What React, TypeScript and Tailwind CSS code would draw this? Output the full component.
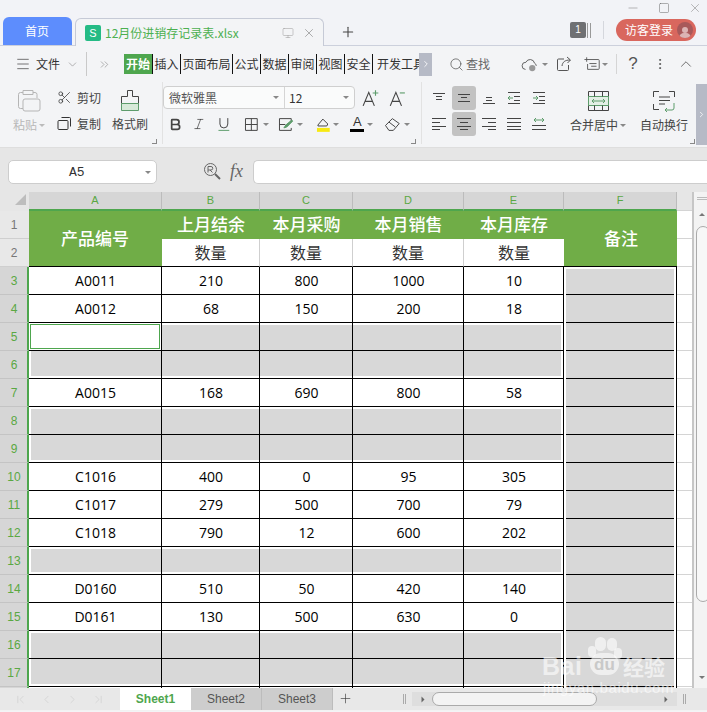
import type { ReactNode } from 'react'
import { Plus, X, Minus, Square, ChevronDown, ChevronUp, ChevronLeft, ChevronRight, Search, EllipsisVertical, Menu, ChevronsRight, ChevronFirst, ChevronLast, Scissors, Bold, Italic, Monitor } from 'lucide-react'

type L = [number, number, number]

// align icons: each line is x1, x2, y in a 16x16 box
function Lines({ lines, arrow }: { lines: L[]; arrow?: string }) {
  return (
    <svg width="16" height="16" viewBox="0 0 16 16" fill="none" stroke="#444" strokeWidth="1">
      {lines.map(([a, b, y], i) => (
        <path key={i} d={`M${a} ${y + 0.5}H${b}`} />
      ))}
      {arrow && <path d={arrow} stroke="#5d9c6b" />}
    </svg>
  )
}

function Caret({ color = '#888' }: { color?: string }) {
  return <span className="block w-0 h-0 border-x-[3px] border-x-transparent border-t-[3px]" style={{ borderTopColor: color }} />
}

function Corner() {
  return <span className="block w-[5px] h-[5px] border-r border-b border-[#888]" />
}

function AlignBtn({ active, children }: { active?: boolean; children: ReactNode }) {
  return (
    <div className={`w-[24px] h-[24px] rounded-[3px] flex items-center justify-center ${active ? 'bg-[#c2c2c2]' : ''}`}>
      {children}
    </div>
  )
}

const menuTabs = [
  { t: '插入', w: 'w-[28px]' },
  { t: '页面布局', w: 'w-[52px]' },
  { t: '公式', w: 'w-[28px]' },
  { t: '数据', w: 'w-[28px]' },
  { t: '审阅', w: 'w-[28px]' },
  { t: '视图', w: 'w-[28px]' },
  { t: '安全', w: 'w-[28px]' },
]

function TitleBar() {
  return (
    <div className="h-[46px] bg-[#f2f3f7] border-b border-[#ccd0dc] flex relative">
      <div className="flex items-end pl-[3px] gap-[3px] h-[45px]">
        <div className="w-[69px] h-[28px] rounded-t-[6px] bg-[#5d8dfd] text-white text-[12px] flex items-center justify-center pr-[1px]">首页</div>
        <div className="w-[249px] h-[28px] -mb-px rounded-t-[6px] bg-[#f3f4f6] border border-b-0 border-[#c6cad6] flex items-center pl-[9px]">
          <span className="w-[16px] h-[16px] rounded-[2px] bg-[#25bb85] text-white text-[11px] leading-[16px] text-center font-['Liberation_Sans']">S</span>
          <span className="ml-[4px] text-[12px] text-[#4cb050] flex-1">12月份进销存记录表.xlsx</span>
          <Monitor size={12} strokeWidth={1} color="#999" className="mr-[8px]" />
          <X size={14} strokeWidth={1} color="#777" className="mr-[7px]" />
        </div>
        <Plus size={16} strokeWidth={1.6} color="#444" className="ml-[13px] mb-[5px]" />
      </div>
      <div className="ml-auto flex flex-col items-end pr-[11px]">
        <div className="flex items-center h-[15px] gap-[18px] -mr-[6px]">
          <Minus size={14} strokeWidth={1} color="#888" />
          <Square size={12} strokeWidth={1} color="#666" />
          <X size={14} strokeWidth={1} color="#888" />
        </div>
        <div className="flex items-center mt-[4px]">
          <div className="w-[16px] h-[16px] rounded-[2px] bg-[#6f7073] text-white text-[10px] leading-[16px] text-center font-['Liberation_Sans'] mr-[1px]">1</div>
          <div className="w-[4px] h-[15px] border-x border-[#999] mr-[12px]" />
          <div className="w-px h-[18px] bg-[#d5d7dd] mr-[12px]" />
          <div className="w-[80px] h-[22px] rounded-full bg-[#d9675e] flex items-center pl-[9px] pr-[3px] justify-between">
            <span className="text-[12px] text-white">访客登录</span>
            <span className="w-[16px] h-[16px] rounded-full bg-[#a8595a] flex flex-col items-center justify-end overflow-hidden">
              <span className="w-[6px] h-[6px] rounded-full bg-[#dcb4b4]" />
              <span className="w-[12px] h-[5px] rounded-t-full bg-[#dcb4b4]" />
            </span>
          </div>
        </div>
      </div>
    </div>
  )
}

function MenuRow() {
  return (
    <div className="h-[36px] flex items-center text-[12px] text-[#333]">
      <Menu size={16} strokeWidth={1} color="#333" className="ml-[15px]" />
      <span className="ml-[5px]">文件</span>
      <ChevronDown size={13} strokeWidth={1} color="#777" className="ml-[6px]" />
      <div className="w-px h-[24px] bg-[#c9c9c9] ml-[7px]" />
      <ChevronsRight size={13} strokeWidth={1} color="#777" className="ml-[11px]" />
      <div className="ml-[13px] w-[28px] h-[20px] bg-[#4ea64e] text-white font-bold flex items-center justify-center">开始</div>
      <div className="w-px h-[20px] bg-[#111]" />
      {menuTabs.map((m) => (
        <div key={m.t} className={`${m.w} h-[20px] border-r border-[#111] flex items-center justify-center`}>{m.t}</div>
      ))}
      <div className="w-[46px] h-[20px] overflow-hidden whitespace-nowrap leading-[20px] pl-[4px]">开发工具</div>
      <div className="w-[13px] h-[23px] bg-[#b6bac6] flex items-center justify-center">
        <ChevronRight size={10} color="#fff" />
      </div>
      <Search size={15} strokeWidth={1.2} color="#555" className="ml-[17px]" />
      <span className="ml-[2px] text-[#666]">查找</span>
      <svg width="18" height="17" viewBox="0 0 20 18" fill="none" stroke="#555" className="ml-[31px]">
        <path d="M5 14.500a4 4 0 0 1 .5-8 5 5 0 0 1 9.500 1 3.500 3.500 0 0 1 2 3" />
        <circle cx="12.500" cy="13" r="3.500" fill="#999" stroke="none" />
      </svg>
      <span className="ml-[3px]"><Caret /></span>
      <svg width="16" height="16" viewBox="0 0 16 16" fill="none" stroke="#555" className="ml-[8px]">
        <path d="M8 3H2.500a1 1 0 0 0-1 1v9.500a1 1 0 0 0 1 1h9a1 1 0 0 0 1-1V9M6 10c.5-4 3-6 8-6M11 1l3.500 3-3 3" />
      </svg>
      <svg width="17" height="16" viewBox="0 0 19 17" fill="none" stroke="#555" className="ml-[12px]">
        <path d="M5 3.500h11a1 1 0 0 1 1 1v9a1 1 0 0 1-1 1H4v-6M6 8h8M8 11h6M3 1v5M.5 3.500h5" />
      </svg>
      <span className="ml-[1px]"><Caret /></span>
      <div className="w-px h-[20px] bg-[#d5d5d5] ml-[8px]" />
      <span className="ml-[10px] text-[17px] text-[#555] font-['Liberation_Sans'] w-[12px] text-center">?</span>
      <EllipsisVertical size={14} strokeWidth={1.6} color="#555" className="ml-[14px]" />
      <ChevronUp size={18} strokeWidth={1} color="#444" className="ml-[10px]" />
    </div>
  )
}

function Ribbon() {
  return (
    <div className="h-[66px] flex text-[12px] text-[#444] border-b border-[#dedede]">
      {/* paste */}
      <div className="w-[54px] pl-[13px] pt-[7px] flex flex-col shrink-0">
        <svg width="27" height="24" viewBox="0 0 27 24" fill="none" stroke="#b5b5b5" className="ml-[4px]">
          <path d="M6 3.500H3.500a2 2 0 0 0-2 2v12a2 2 0 0 0 2 2H6M16 3.500h2a2 2 0 0 1 2 2V9M6 1.500h10v4H6zM8 10h13a2 2 0 0 1 2 2v8a2 2 0 0 1-2 2H8a2 2 0 0 1-2-2v-8a2 2 0 0 1 2-2z" />
        </svg>
        <div className="mt-[3px] flex items-center gap-[2px] text-[#b8b8b8]">粘贴<Caret color="#bbb" /></div>
      </div>
      {/* cut/copy */}
      <div className="w-[56px] pl-[3px] pt-[7px] flex flex-col gap-[9px] shrink-0">
        <div className="flex items-center gap-[5px] h-[17px]"><Scissors size={15} strokeWidth={1.2} color="#333" />剪切</div>
        <div className="flex items-center gap-[5px] h-[17px]">
          <svg width="15" height="15" viewBox="0 0 15 15" fill="none" stroke="#333"><path d="M4.500 1.500h8a1 1 0 0 1 1 1v8M2 4.500h8a1 1 0 0 1 1 1v7a1 1 0 0 1-1 1H2a1 1 0 0 1-1-1v-7a1 1 0 0 1 1-1z" /></svg>
          复制
        </div>
      </div>
      {/* format brush */}
      <div className="w-[38px] flex flex-col items-center pt-[7px] pl-[2px] shrink-0">
        <svg width="22" height="23" viewBox="0 0 22 23" fill="none" stroke="#444">
          <path d="M8.500 1.500h5v6h6v7h-17v-7h6z" />
          <path d="M2.500 14.500h17v7h-17z" fill="#d7e9d9" stroke="#5d9c6b" />
        </svg>
        <div className="mt-[3px] whitespace-nowrap">格式刷</div>
      </div>
      <div className="w-[9px] flex flex-col justify-end pb-[3px] items-end shrink-0"><Corner /></div>
      <div className="w-px h-[62px] bg-[#e2e2e2] ml-[5px] shrink-0" />
      {/* font */}
      <div className="w-[247px] flex flex-col pt-[4px] shrink-0">
        <div className="flex items-center">
          <div className="w-[192px] h-[23px] bg-white/60 border border-[#cfcfcf] rounded-[4px] flex text-[12px] text-[#555] shrink-0">
            <div className="w-[121px] flex items-center pl-[5px] justify-between pr-[5px] border-r border-[#d5d5d5]">微软雅黑<Caret /></div>
            <div className="flex-1 flex items-center pl-[4px] justify-between pr-[5px]"><span className="text-[#333]">12</span><Caret /></div>
          </div>
          <svg width="18" height="18" viewBox="0 0 16 16" fill="none" stroke="#444" className="ml-[7px] shrink-0"><path d="M1 15 6 3l5 12M3 11h6" /><path d="M12 1v5M9.500 3.500h5" stroke="#5d9c6b" /></svg>
          <svg width="16" height="18" viewBox="0 0 14 16" fill="none" stroke="#444" className="ml-[9px] shrink-0"><path d="M1 15 6 3l5 12M3 11h6" /><path d="M9.500 3.500h4.500" stroke="#5d9c6b" /></svg>
        </div>
        <div className="flex items-center h-[24px] mt-[3px] pl-[5px]">
          <Bold size={15} strokeWidth={2.8} color="#444" />
          <Italic size={14} strokeWidth={1.2} color="#333" className="ml-[9px]" />
          <svg width="14" height="14" viewBox="0 0 14 14" fill="none" stroke="#444" className="ml-[12px]"><path d="M3 1v6a4 4 0 0 0 8 0V1" /><path d="M1.500 13.500h11" stroke="#5d9c6b" /></svg>
          <svg width="15" height="15" viewBox="0 0 15 15" fill="none" stroke="#444" className="ml-[13px]"><path d="M1.500 1.500h12v12h-12zM7.500 1.500v12M1.500 7.500h12" /></svg>
          <span className="ml-[4px]"><Caret /></span>
          <svg width="16" height="15" viewBox="0 0 16 15" fill="none" stroke="#444" className="ml-[9px]"><path d="M13.500 5V1.500h-12v12h12V11M1.500 7.500h6" /><path d="M6 11l2-3 6-5 1 1-6 6z" stroke="#5d9c6b" fill="#5d9c6b" /></svg>
          <span className="ml-[3px]"><Caret /></span>
          <svg width="17" height="17" viewBox="0 0 17 17" fill="none" stroke="#444" className="ml-[12px]"><path d="M3 9l5-6 5 5-1 2H3z" /><rect x="2" y="12" width="13" height="4" fill="#f7e912" stroke="none" /></svg>
          <span className="ml-[2px]"><Caret /></span>
          <div className="ml-[11px] flex flex-col items-center w-[14px] leading-none">
            <span className="text-[13px] text-[#333] font-['Liberation_Sans'] leading-[12px]">A</span>
            <span className="block w-[14px] h-[3px] bg-black mt-[1px]" />
          </div>
          <span className="ml-[3px]"><Caret /></span>
          <svg width="17" height="15" viewBox="0 0 17 15" fill="none" stroke="#444" className="ml-[11px]"><path d="M1.500 8.500 8.500 1.500l7 5-6 7H5zM5 5l6.500 5" /></svg>
          <span className="ml-[3px]"><Caret /></span>
        </div>
      </div>
      <div className="w-[6px] flex flex-col justify-end pb-[3px] items-end shrink-0"><Corner /></div>
      <div className="w-px h-[62px] bg-[#e2e2e2] ml-[5px] shrink-0" />
      {/* alignment */}
      <div className="w-[143px] pl-[5px] pt-[4px] flex flex-col gap-[2px] shrink-0">
        <div className="flex gap-px">
          <AlignBtn><Lines lines={[[2, 14, 3], [5, 11, 6], [5, 11, 9]]} /></AlignBtn>
          <AlignBtn active><Lines lines={[[2, 14, 4], [5, 11, 7], [2, 14, 11]]} /></AlignBtn>
          <AlignBtn><Lines lines={[[5, 11, 7], [5, 11, 10], [2, 14, 13]]} /></AlignBtn>
          <AlignBtn><Lines lines={[[2, 14, 2], [8, 14, 6], [8, 14, 10], [2, 14, 13]]} arrow="M7 8H2M4 6 2 8l2 2" /></AlignBtn>
          <AlignBtn><Lines lines={[[2, 14, 2], [8, 14, 6], [8, 14, 10], [2, 14, 13]]} arrow="M2 8h5M5 6l2 2-2 2" /></AlignBtn>
        </div>
        <div className="flex gap-px">
          <AlignBtn><Lines lines={[[1, 15, 2], [1, 9, 6], [1, 15, 10], [1, 9, 13]]} /></AlignBtn>
          <AlignBtn active><Lines lines={[[1, 15, 2], [4, 12, 6], [1, 15, 10], [4, 12, 13]]} /></AlignBtn>
          <AlignBtn><Lines lines={[[1, 15, 2], [7, 15, 6], [1, 15, 10], [7, 15, 13]]} /></AlignBtn>
          <AlignBtn><Lines lines={[[1, 15, 2], [1, 15, 6], [1, 15, 10], [1, 15, 13]]} /></AlignBtn>
          <AlignBtn><Lines lines={[[1, 15, 9], [1, 15, 13]]} arrow="M3 4h10M5 2 3 4l2 2M11 2l2 2-2 2" /></AlignBtn>
        </div>
      </div>
      {/* merge + wrap */}
      <div className="w-[66px] flex flex-col items-center pt-[8px] shrink-0">
        <svg width="23" height="22" viewBox="0 0 23 22" fill="none" stroke="#444">
          <path d="M1.500 1.500h20v19h-20z" /><path d="M1.500 6.500h20v9h-20z" stroke="#5d9c6b" fill="#e3efe5" />
          <path d="M7.500 1.500v5M15.500 1.500v5M7.500 15.500v5M15.500 15.500v5" />
          <path d="M5 11h13M7 9l-2 2 2 2M16 9l2 2-2 2" stroke="#5d9c6b" />
        </svg>
        <div className="mt-[4px] flex items-center gap-[2px] whitespace-nowrap">合并居中<Caret /></div>
      </div>
      <div className="w-[52px] ml-[7px] flex flex-col items-center pt-[8px] shrink-0">
        <svg width="24" height="22" viewBox="0 0 24 22" fill="none" stroke="#444">
          <path d="M1.500 7V1.500H7M17 1.500h5.500V7M1.500 14v5.500H7" />
          <path d="M7 7h11M7 10.500h11M7 14h6" />
          <path d="M22 13v5a2 2 0 0 1-2 2h-7M15 18l-2 2 2 2" stroke="#5d9c6b" />
        </svg>
        <div className="mt-[4px] whitespace-nowrap">自动换行</div>
      </div>
      <div className="w-[6px] flex flex-col justify-end pb-[3px] shrink-0"><Corner /></div>
      <div className="w-[11px] h-[61px] bg-[#b6bac6] mt-[2px] flex items-center justify-center shrink-0">
        <ChevronRight size={9} color="#fff" />
      </div>
    </div>
  )
}

function FormulaBar() {
  return (
    <div className="h-[44px] bg-[#e6e6e6] flex items-start pt-[12px] pl-[8px]">
      <div className="w-[149px] h-[24px] bg-white border border-[#cdcdcd] rounded-[5px] flex items-center pl-[60px] pr-[5px] justify-between">
        <span className="text-[13px] leading-[16px] pt-[2px] text-[#333] font-['Liberation_Mono']">A5</span>
        <Caret />
      </div>
      <div className="ml-[46px] mt-[2px] w-[18px] h-[18px]">
        <svg width="18" height="18" viewBox="0 0 18 18" fill="none" stroke="#666">
          <circle cx="7.500" cy="7.500" r="6" /><path d="M12 12l5 5" strokeWidth="2" /><path d="M5 10.500v-6h3a1.500 1.500 0 0 1 0 3.500H5M7 8l2.500 2.500" />
        </svg>
      </div>
      <span className="ml-[9px] w-[15px] text-[18px] leading-[22px] italic text-[#666] font-['Liberation_Serif']">fx</span>
      <div className="ml-[8px] flex-1 h-[24px] bg-white border border-[#cdcdcd] border-r-0 rounded-l-[5px]" />
    </div>
  )
}

type Row = { n: number; v?: [string, string, string, string, string]; first?: boolean; last?: boolean; sel?: boolean }

const rows: Row[] = [
  { n: 3, v: ['A0011', '210', '800', '1000', '10'] },
  { n: 4, v: ['A0012', '68', '150', '200', '18'] },
  { n: 5, first: true, sel: true },
  { n: 6, last: true },
  { n: 7, v: ['A0015', '168', '690', '800', '58'] },
  { n: 8, first: true },
  { n: 9, last: true },
  { n: 10, v: ['C1016', '400', '0', '95', '305'] },
  { n: 11, v: ['C1017', '279', '500', '700', '79'] },
  { n: 12, v: ['C1018', '790', '12', '600', '202'] },
  { n: 13, first: true, last: true },
  { n: 14, v: ['D0160', '510', '50', '420', '140'] },
  { n: 15, v: ['D0161', '130', '500', '630', '0'] },
  { n: 16, first: true },
  { n: 17, last: true },
]

const cols = ['A', 'B', 'C', 'D', 'E', 'F']

function RowHead({ n, light }: { n: number; light?: boolean }) {
  return light ? (
    <div className="bg-[#e8e8e8] border-b border-[#cfcfcf] text-[#777] text-[12px] flex items-center justify-center pr-[1px] font-['Liberation_Sans']">{n}</div>
  ) : (
    <div className="bg-[#d6d6d6] border-b border-[#c4c4c4] border-r-2 border-r-[#4ea64e] text-[#5aa843] text-[12px] flex items-center justify-center pl-[1px] font-['Liberation_Sans']">{n}</div>
  )
}

function GrayCell({ row, col }: { row: Row; col: number }) {
  const pad = `${row.first ? 'pt-[2px]' : ''} ${row.last ? 'pb-[2px]' : ''} ${col === 0 ? 'pl-[2px]' : ''} ${col === 4 ? 'pr-[2px]' : ''}`
  return (
    <div className={`bg-white border-r border-b border-black ${pad}`}>
      {row.sel && col === 0 ? (
        <div className="h-full -ml-px w-[130px] -mt-px border border-[#4ea64e] bg-white" />
      ) : (
        <div className="h-full bg-[#d8d8d8]" />
      )}
    </div>
  )
}

function Sheet() {
  return (
    <div className="flex h-[496px] overflow-hidden">
      <div className="w-[692px] overflow-hidden bg-white">
        <div className="grid grid-cols-[29px_133px_98px_93px_111px_100px_113px_15px] grid-rows-[19px_repeat(18,28px)] font-['Open_Sans','Noto_Sans_CJK_SC',sans-serif]">
          <div className="bg-[#e6e6e6] flex items-end justify-end pr-[3px] pb-[4px] border-b-2 border-[#e6e6e6]">
            <span className="w-0 h-0 border-l-[11px] border-l-transparent border-b-[11px] border-b-[#bdbdbd]" />
          </div>
          {cols.map((c) => (
            <div key={c} className="bg-[#d6d6d6] border-r border-[#bcbcbc] border-b-2 border-b-[#4ea64e] text-[11px] text-[#5aa843] flex items-center justify-center font-['Liberation_Sans']">{c}</div>
          ))}
          <div className="bg-[#e6e6e6] border-b border-[#d4d4d4]" />

          <RowHead n={1} light />
          <div className="row-span-2 bg-[#70ad47] border-b border-black text-white text-[17px] font-medium flex items-center justify-center pr-[1px]">产品编号</div>
          {['上月结余', '本月采购', '本月销售', '本月库存'].map((t) => (
            <div key={t} className="bg-[#70ad47] text-white text-[17px] font-medium flex items-center justify-center">{t}</div>
          ))}
          <div className="row-span-2 bg-[#70ad47] border-b border-black text-white text-[17px] font-medium flex items-center justify-center pl-[1px]">备注</div>
          <div className="border-b border-[#d4d4d4]" />

          <RowHead n={2} light />
          {[0, 1, 2, 3].map((i) => (
            <div key={i} className={`bg-white border-b border-black text-[16px] text-[#333] flex items-center justify-center ${i < 3 ? 'border-r border-r-[#cfcfcf]' : ''}`}>数量</div>
          ))}
          <div className="border-b border-[#d4d4d4]" />

          {rows.map((r) => (
            <div key={r.n} className="contents">
              <RowHead n={r.n} />
              {[0, 1, 2, 3, 4].map((c) =>
                r.v ? (
                  <div key={c} className="bg-white border-r border-b border-black pl-[1px] text-[14px] text-black flex items-center justify-center">{r.v[c]}</div>
                ) : (
                  <GrayCell key={c} row={r} col={c} />
                ),
              )}
              <div className={`bg-white border-r border-black px-[2px] ${r.n === 3 ? 'pt-[2px]' : ''}`}>
                <div className="h-full bg-[#d8d8d8] border-b border-black" />
              </div>
              <div className="border-b border-[#d4d4d4]" />
            </div>
          ))}
          <div className="bg-[#d6d6d6] border-r-2 border-r-[#4ea64e]" />
          {[0, 1, 2, 3, 4].map((c) => (
            <div key={c} className="bg-white border-r border-black" />
          ))}
          <div className="bg-white border-r border-black px-[2px]"><div className="h-full bg-[#d8d8d8]" /></div>
          <div />
        </div>
      </div>
      <div className="w-[15px] bg-[#f3f3f3] border-l-2 border-[#c6c6c6] flex flex-col items-center pl-[3px] overflow-hidden">
        <div className="w-[10px] h-[3px] border-y border-[#bbb] mt-[5px] shrink-0" />
        <span className="mt-[13px] rotate-180"><Caret color="#777" /></span>
        <div className="w-[14px] self-start -ml-px mt-[10px] h-[376px] bg-[#f7f7f7] border border-[#aaa] rounded-full shrink-0" />
        <span className="mt-[74px]"><Caret color="#777" /></span>
      </div>
    </div>
  )
}

function SheetTabs() {
  return (
    <div className="h-[23px] bg-[#e8e8e8] flex items-start text-[12px] border-b border-[#f2f2f2]">
      <div className="w-[120px] flex items-center pl-[14px] h-[22px] gap-[13px]">
        <ChevronFirst size={13} strokeWidth={1} color="#c8c8c8" />
        <ChevronLeft size={13} strokeWidth={1} color="#c8c8c8" />
        <ChevronRight size={13} strokeWidth={1} color="#c8c8c8" />
        <ChevronLast size={13} strokeWidth={1} color="#c8c8c8" />
      </div>
      <div className="w-[71px] h-[22px] bg-white text-[#4ea64e] font-bold flex items-center justify-center font-['Liberation_Sans']">Sheet1</div>
      <div className="w-[71px] h-[22px] bg-[#cdcdcd] border-r border-[#bcbcbc] text-[#555] flex items-center justify-center font-['Liberation_Sans']">Sheet2</div>
      <div className="w-[71px] h-[22px] bg-[#cdcdcd] border-r border-[#bcbcbc] text-[#555] flex items-center justify-center font-['Liberation_Sans']">Sheet3</div>
      <Plus size={15} strokeWidth={1} color="#333" className="ml-[5px] mt-[3px]" />
      <div className="w-[3px] h-[10px] border-x border-[#aaa] ml-[50px] mt-[6px]" />
      <div className="ml-[6px] mt-[4px] w-[265px] h-[14px] bg-[#dedede] flex items-center px-[8px]">
        <span className="-rotate-90"><Caret color="#666" /></span>
        <div className="ml-[6px] w-[165px] h-[14px] bg-[#f3f3f3] border border-[#aaa] rounded-full" />
        <span className="ml-auto rotate-[-90deg]"><Caret color="#666" /></span>
      </div>
      <div className="w-[3px] h-[10px] border-x border-[#aaa] ml-[6px] mt-[6px]" />
    </div>
  )
}

// baidu jingyan mark over the lower right corner
function Watermark() {
  return (
    <div className="absolute left-[535px] top-[630px] w-[140px] h-[70px] text-white/60 pointer-events-none">
      <span className="absolute left-[53px] top-[16px] w-[8px] h-[11px] rounded-full bg-white/60" />
      <span className="absolute left-[60px] top-[7px] w-[11px] h-[14px] rounded-full bg-white/60" />
      <span className="absolute left-[72px] top-[8px] w-[10px] h-[13px] rounded-full bg-white/60" />
      <span className="absolute left-[79px] top-[18px] w-[8px] h-[11px] rounded-full bg-white/60" />
      <span className="absolute left-[55px] top-[23px] w-[29px] h-[22px] rounded-[11px] bg-white/60" />
      <span className="absolute left-[7px] top-[23px] text-[25px] leading-[26px] font-bold font-['Liberation_Sans'] tracking-[0.5px] whitespace-nowrap">Bai</span>
      <span className="absolute left-[59px] top-[26px] text-[17px] leading-[18px] font-bold text-[#c9c9c9] font-['Liberation_Sans']">du</span>
      <span className="absolute left-[88px] top-[24px] text-[21px] leading-[24px] font-bold whitespace-nowrap">经验</span>
      <span className="absolute left-[8px] top-[49px] text-[15px] leading-[18px] tracking-[0.6px] font-['Liberation_Sans'] whitespace-nowrap">jingyan.baidu.com</span>
    </div>
  )
}

export default function App() {
  return (
    <div className="w-[707px] h-[712px] overflow-hidden relative bg-[#f3f4f6] font-['Noto_Sans_CJK_SC',sans-serif]">
      <TitleBar />
      <MenuRow />
      <Ribbon />
      <FormulaBar />
      <Sheet />
      <SheetTabs />
      <Watermark />
    </div>
  )
}
